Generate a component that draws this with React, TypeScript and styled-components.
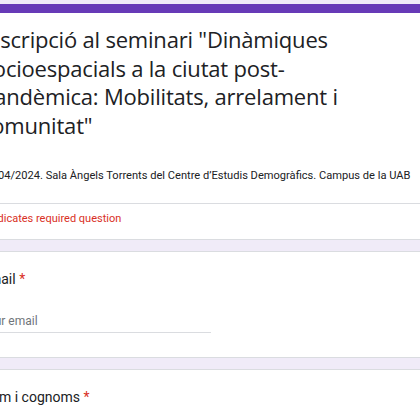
import React from 'react';
import styled, { createGlobalStyle } from 'styled-components';

const GlobalStyle = createGlobalStyle`
  html, body {
    margin: 0;
    padding: 0;
    background: #f0ebf8;
    overflow: hidden;
  }
  body {
    font-family: Roboto, "Liberation Sans", Arial, sans-serif;
    color: #202124;
  }
`;

function App() {
  return (
    <>
      <GlobalStyle />
      <Page>
        <HeaderCard>
          <Title>
            Inscripció al seminari "Dinàmiques Socioespacials a la ciutat post-pandèmica: Mobilitats, arrelament i
            comunitat"
          </Title>
          <Description>
            22/04/2024. Sala Àngels Torrents del Centre d’Estudis Demogràfics. Campus de la UAB
          </Description>
          <Divider />
          <RequiredNote>* Indicates required question</RequiredNote>
        </HeaderCard>

        <QuestionCard>
          <Label>
            Email <Star>*</Star>
          </Label>
          <TextInput placeholder="Your email" />
        </QuestionCard>

        <QuestionCard>
          <Label>
            Nom i cognoms <Star>*</Star>
          </Label>
          <TextInput placeholder="Your answer" />
        </QuestionCard>
      </Page>
    </>
  );
}

export default App;

const Page = styled.div`
  display: flex;
  flex-direction: column;
  gap: 11px;
  width: 520px;
  margin-left: -44px;
  padding-top: 4px;
`;

const Card = styled.div`
  background: #fff;
  border: 1px solid #dadce0;
  border-radius: 8px;
  padding: 0 24px;
`;

const HeaderCard = styled(Card)`
  border-top: 9px solid #673ab7;
  padding-top: 12px;
  padding-bottom: 12px;
`;

const Title = styled.h1`
  margin: 0;
  max-width: 412px;
  font-family: "Open Sans", Roboto, sans-serif;
  font-weight: 400;
  font-size: 22px;
  line-height: 28.5px;
  letter-spacing: -0.2px;
  color: #202124;
`;

const Description = styled.div`
  margin-top: 29px;
  font-size: 11.1px;
  line-height: 16px;
  color: #202124;
  white-space: nowrap;
`;

const Divider = styled.div`
  height: 1px;
  background: #dadce0;
  margin: 19px -24px 7px;
`;

const RequiredNote = styled.div`
  font-size: 11px;
  line-height: 16px;
  color: #d93025;
`;

const QuestionCard = styled(Card)`
  padding-top: 17px;
  padding-bottom: 24px;
  display: flex;
  flex-direction: column;
`;

const Label = styled.div`
  font-size: 14px;
  line-height: 20px;
  color: #202124;
`;

const Star = styled.span`
  color: #d93025;
`;

const TextInput = styled.input`
  margin-top: 24px;
  width: 230px;
  border: none;
  border-bottom: 1px solid #dadce0;
  padding: 0 0 3px;
  font-family: Roboto, sans-serif;
  font-size: 12px;
  line-height: 16px;
  color: #202124;
  background: transparent;
  outline: none;

  &::placeholder {
    color: #70757a;
  }
`;
